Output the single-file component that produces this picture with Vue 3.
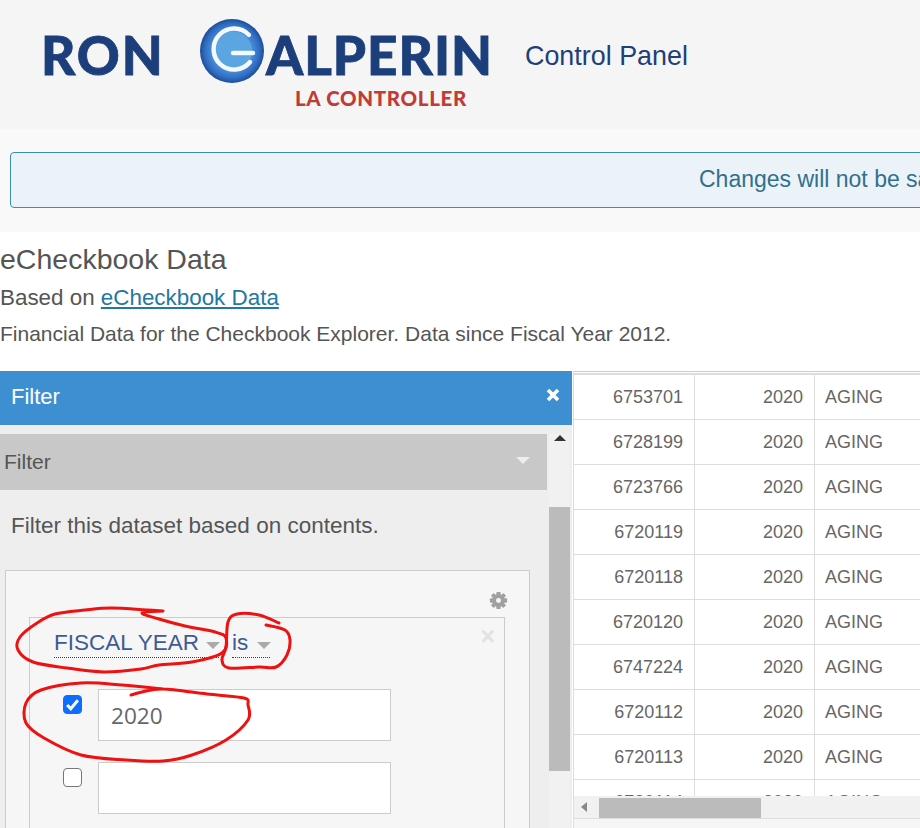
<script setup>
const rows = ['6753701','6728199','6723766','6720119','6720118','6720120','6747224','6720112','6720113','6720114']

const strokes = [
  [[163,611],[142,613],[159,619],[185,626],[215,632],[226,638],[222,653],[192,662],[159,665],[141,669],[104,672],[67,668],[33,662],[18,650],[20,637],[37,623],[55,614],[85,610],[111,608],[148,610],[163,611]],
  [[279,623],[259,615],[237,614],[228,622],[226,647],[222,660],[229,668],[259,667],[276,667],[287,655],[290,640],[285,630],[266,625]],
  [[131,695],[142,692],[163,689],[207,694],[244,698],[248,705],[248,720],[226,740],[192,755],[163,761],[126,760],[81,755],[44,738],[26,723],[26,703],[41,690],[81,683],[122,685],[163,689]]
]

function smooth(p) {
  let d = `M${p[0][0]} ${p[0][1]}`
  for (let i = 0; i < p.length - 1; i++) {
    const a = p[i - 1] || p[i], b = p[i], c = p[i + 1], e = p[i + 2] || c
    const c1 = [b[0] + (c[0] - a[0]) / 6, b[1] + (c[1] - a[1]) / 6]
    const c2 = [c[0] - (e[0] - b[0]) / 6, c[1] - (e[1] - b[1]) / 6]
    d += ` C${c1[0].toFixed(1)} ${c1[1].toFixed(1)} ${c2[0].toFixed(1)} ${c2[1].toFixed(1)} ${c[0]} ${c[1]}`
  }
  return d
}
const paths = strokes.map(smooth)
const teeth = [0, 45, 90, 135, 180, 225, 270, 315]
</script>

<template>
  <div class="page">
    <header class="top">
      <div class="logo">
        <div class="logo-row">
          <span class="wordmark ron">RON</span>
          <svg class="g-mark" width="64" height="64" viewBox="0 0 64 64">
            <defs>
              <radialGradient id="orb" cx="50%" cy="50%" r="50%">
                <stop offset="0.62" stop-color="#4a8ddb" />
                <stop offset="0.86" stop-color="#2f6cc0" />
                <stop offset="1" stop-color="#1d4c96" />
              </radialGradient>
            </defs>
            <circle cx="32" cy="32" r="32" fill="url(#orb)" />
            <circle cx="32" cy="32" r="20" fill="#5ba5e0" />
            <path d="M49 16 A20.5 20.5 0 1 0 50 43" fill="none" stroke="#f4f9fe" stroke-width="4.4" stroke-linecap="round" />
            <path d="M33 34 H53" stroke="#f4f9fe" stroke-width="4.4" stroke-linecap="round" />
          </svg>
          <span class="wordmark alperin">ALPERIN</span>
        </div>
        <div class="tagline">LA CONTROLLER</div>
      </div>
      <div class="brand-title">Control Panel</div>
    </header>

    <section class="notice-band">
      <div class="notice">Changes will not be saved</div>
    </section>

    <section class="intro">
      <h1>eCheckbook Data</h1>
      <p class="based">Based on <a href="#">eCheckbook Data</a></p>
      <p class="desc">Financial Data for the Checkbook Explorer. Data since Fiscal Year 2012.</p>
    </section>

    <section class="workspace">
      <aside class="filter-panel">
        <div class="panel-head">
          <span>Filter</span>
          <svg width="14" height="14" viewBox="0 0 14 14"><path d="M2 2 L12 12 M12 2 L2 12" stroke="#fff" stroke-width="3.6" /></svg>
        </div>
        <div class="panel-body">
          <div class="panel-main">
            <div class="accordion">
              <span>Filter</span>
              <i class="caret white"></i>
            </div>
            <p class="hint">Filter this dataset based on contents.</p>
            <div class="rule-box">
              <div class="gear-row">
                <svg width="19" height="19" viewBox="0 0 20 20">
                  <rect v-for="t in teeth" :key="t" x="8" y="1" width="4" height="18" rx="0.8" fill="#a0a0a0" :transform="`rotate(${t} 10 10)`" />
                  <circle cx="10" cy="10" r="6.6" fill="#a0a0a0" />
                  <circle cx="10" cy="10" r="2.6" fill="#f6f6f6" />
                </svg>
              </div>
              <div class="rule">
                <span class="rule-x">×</span>
                <div class="selectors">
                  <span class="sel field">FISCAL YEAR<i class="caret"></i></span>
                  <span class="sel op">is<i class="caret"></i></span>
                </div>
                <div class="value-row first">
                  <span class="check on">
                    <svg width="15" height="15" viewBox="0 0 14 14"><path d="M2 7.5 L5.4 11 L12 3" fill="none" stroke="#fff" stroke-width="2.8" /></svg>
                  </span>
                  <input class="value" type="text" value="2020" readonly />
                </div>
                <div class="value-row">
                  <span class="check"></span>
                  <input class="value" type="text" value="" readonly />
                </div>
              </div>
            </div>
          </div>
          <div class="v-scroll">
            <i class="arrow-up"></i>
            <div class="v-thumb"></div>
          </div>
        </div>
      </aside>

      <div class="table-wrap">
        <div class="table-rows">
          <div v-for="id in rows" :key="id" class="row">
            <span class="cell id">{{ id }}</span>
            <span class="cell year">2020</span>
            <span class="cell cat">AGING</span>
          </div>
        </div>
        <div class="h-scroll">
          <i class="arrow-left"></i>
          <div class="h-thumb"></div>
        </div>
        <div class="table-foot"></div>
      </div>
    </section>

    <svg class="scribble" width="920" height="828" viewBox="0 0 920 828">
      <path v-for="(d, i) in paths" :key="i" :d="d" fill="none" stroke="#ee1111" stroke-width="3" stroke-linecap="round" stroke-linejoin="round" />
    </svg>
  </div>
</template>

<style>
html, body { margin: 0; background: #fff; }
</style>

<style scoped>
.page {
  position: relative;
  width: 920px;
  height: 828px;
  overflow: hidden;
  background: #fff;
  font-family: "Liberation Sans", Arial, sans-serif;
}
.top {
  height: 129px;
  box-sizing: border-box;
  background: #f5f5f5;
  display: flex;
  padding: 19px 0 0 41px;
}
.logo { width: 484px; }
.logo-row { display: flex; align-items: center; height: 64px; }
.wordmark {
  font-family: Lato, "Liberation Sans", sans-serif;
  font-weight: 900;
  font-size: 53px;
  line-height: 64px;
  padding-top: 7px;
  color: #1c3f7c;
  -webkit-text-stroke: 0.8px #1c3f7c;
}
.ron { width: 159px; letter-spacing: 2px; }
.g-mark { flex: none; }
.alperin { margin-left: 2px; letter-spacing: 1px; white-space: nowrap; }
.tagline {
  margin: 4px 0 0 254px;
  font-family: Lato, "Liberation Sans", sans-serif;
  font-weight: 900;
  font-size: 20.5px;
  line-height: 22px;
  letter-spacing: 0.65px;
  color: #c23b36;
  white-space: nowrap;
}
.brand-title {
  font-size: 26.9px;
  line-height: 36px;
  margin-top: 19px;
  color: #1f3f78;
  white-space: nowrap;
}
.notice-band {
  height: 103px;
  box-sizing: border-box;
  background: #f9f9f9;
  padding: 23px 0 0 10px;
}
.notice {
  width: 1300px;
  height: 56px;
  box-sizing: border-box;
  border: 1px solid #3a8fb7;
  border-radius: 4px;
  background: #ebf3f9;
  color: #31708f;
  font-size: 23px;
  line-height: 53px;
  padding-left: 688px;
  white-space: nowrap;
}
.intro { height: 139px; color: #555; white-space: nowrap; }
.intro h1 {
  margin: 0;
  padding-top: 10px;
  font-weight: 400;
  font-size: 28.5px;
  line-height: 34px;
}
.based { margin: 0; padding-top: 8px; font-size: 22.4px; line-height: 28px; }
.based a { color: #23789f; }
.desc { margin: 0; padding-top: 9px; font-size: 21px; line-height: 26px; }
.workspace { display: flex; height: 457px; }
.filter-panel {
  width: 572px;
  flex: none;
  background: #eee;
  color: #555;
  overflow: hidden;
}
.panel-head {
  height: 54px;
  box-sizing: border-box;
  background: #3d8fd1;
  color: #fff;
  font-size: 22px;
  line-height: 52px;
  padding: 0 12px 0 11px;
  display: flex;
  justify-content: space-between;
  align-items: flex-start;
}
.panel-head svg { margin-top: 17px; }
.panel-body { display: flex; height: 394px; margin-top: 9px; }
.panel-main { width: 547px; flex: none; }
.accordion {
  height: 56px;
  background: #c8c8c8;
  padding: 0 17px 0 4px;
  font-size: 21px;
  line-height: 56px;
  display: flex;
  justify-content: space-between;
  align-items: center;
}
.caret {
  display: inline-block;
  width: 0;
  height: 0;
  border-left: 7px solid transparent;
  border-right: 7px solid transparent;
  border-top: 7px solid #aaa;
  vertical-align: middle;
}
.caret.white { border-top-color: #eee; margin-top: -3px; }
.hint {
  margin: 0;
  padding: 20px 0 0 11px;
  height: 60px;
  box-sizing: border-box;
  font-size: 22.5px;
  line-height: 32px;
  white-space: nowrap;
}
.rule-box {
  margin: 20px 17px 0 5px;
  height: 300px;
  box-sizing: border-box;
  border: 1px solid #ccc;
  background: #f6f6f6;
  padding: 0 24px 0 23px;
}
.gear-row { display: flex; justify-content: flex-end; height: 46px; padding: 20px 0 0; box-sizing: border-box; margin-right: -3px; }
.rule {
  position: relative;
  height: 260px;
  box-sizing: border-box;
  border: 1px solid #ccc;
  padding: 0 0 0 24px;
}
.rule-x {
  position: absolute;
  right: 9px;
  top: 3px;
  font-size: 25px;
  font-weight: 700;
  line-height: 30px;
  color: #e2e2e2;
}
.selectors { display: flex; height: 40px; padding-top: 5px; color: #3f5a94; font-size: 22.5px; }
.sel { height: 34px; line-height: 40px; border-bottom: 1px dotted #2a3f6e; white-space: nowrap; }
.sel .caret { margin: 2px 0 0 7px; }
.field { width: 165px; }
.op { width: 38px; margin-left: 13px; }
.op .caret { margin-left: 9px; }
.value-row { display: flex; margin-top: 21px; }
.value-row.first { margin-top: 26px; }
.check {
  width: 19px;
  height: 19px;
  box-sizing: border-box;
  flex: none;
  margin: 6px 16px 0 9px;
  border: 1px solid #767676;
  border-radius: 4px;
  background: #fff;
  display: flex;
  align-items: center;
  justify-content: center;
}
.check.on { background: #0d6efd; border-color: #0d6efd; }
.value {
  width: 293px;
  height: 52px;
  box-sizing: border-box;
  border: 1px solid #ccc;
  background: #fff;
  padding: 0 12px;
  margin: 0;
  outline: none;
  font-family: "Open Sans", sans-serif;
  font-size: 22.6px;
  color: #666;
}
.v-scroll {
  position: relative;
  width: 21px;
  margin-left: 2px;
  background: #f1f1f1;
}
.arrow-up {
  position: absolute;
  left: 5px;
  top: 1px;
  border-left: 6px solid transparent;
  border-right: 6px solid transparent;
  border-bottom: 6px solid #333;
}
.v-thumb { position: absolute; left: 0; top: 73px; width: 21px; height: 264px; background: #bbb; }
.table-wrap {
  flex: 1;
  min-width: 0;
  margin-left: 1px;
  border-left: 1px solid #ddd;
  position: relative;
  display: flex;
  flex-direction: column;
  color: #666;
  font-size: 18px;
}
.table-rows {
  height: 425px;
  overflow: hidden;
  border-top: 1px solid #ccc;
  box-sizing: border-box;
}
.table-rows::before { content: ""; display: block; height: 2px; margin-top: 1px; background: #ddd; }
.row { display: flex; height: 45px; box-sizing: border-box; border-bottom: 1px solid #ddd; }
.cell { line-height: 44px; box-sizing: border-box; white-space: nowrap; }
.id { width: 121px; padding-right: 11px; text-align: right; border-right: 1px solid #ddd; }
.year { width: 120px; padding-right: 11px; text-align: right; border-right: 1px solid #ddd; }
.cat { padding-left: 10px; }
.h-scroll { position: relative; height: 22px; background: #f1f1f1; flex: none; }
.arrow-left {
  position: absolute;
  left: 7px;
  top: 6px;
  border-top: 5.5px solid transparent;
  border-bottom: 5.5px solid transparent;
  border-right: 6px solid #888;
}
.h-thumb { position: absolute; left: 25px; top: 2px; width: 162px; height: 20px; background: #bbb; }
.table-foot { flex: 1; background: #f6f6f6; border-top: 1px solid #ddd; }
.scribble { position: absolute; left: 0; top: 0; pointer-events: none; }
</style>
